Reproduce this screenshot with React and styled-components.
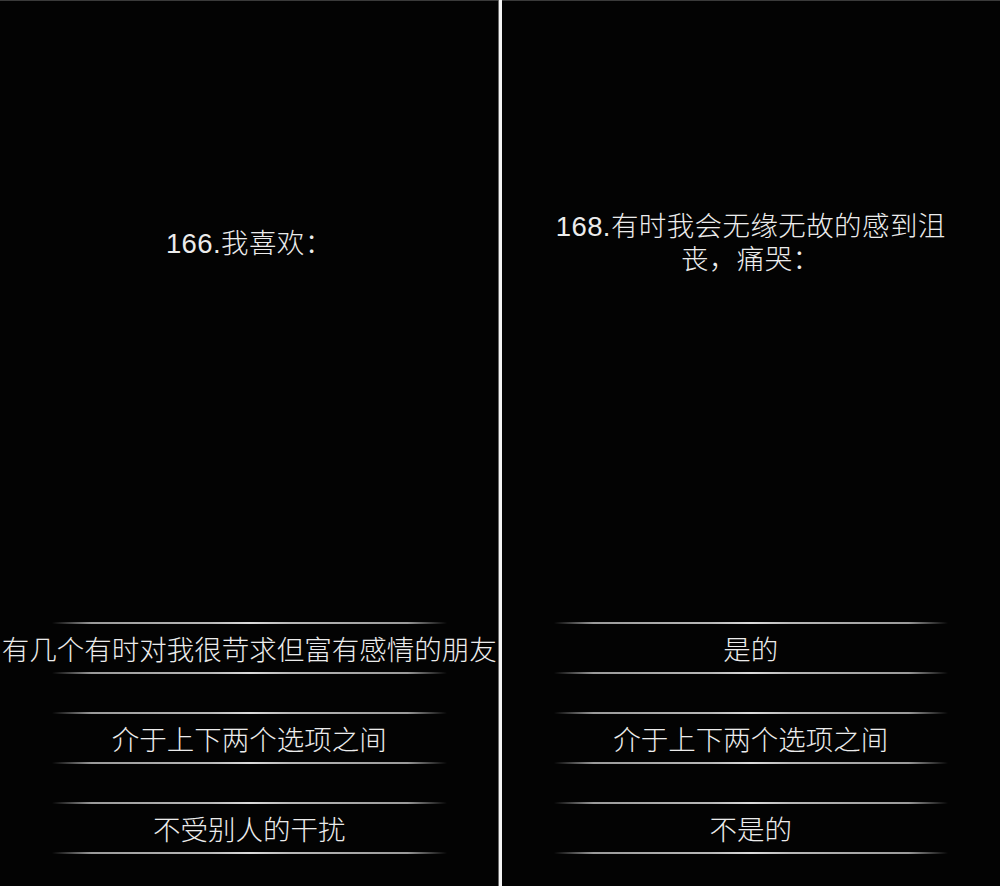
import React from 'react'
import styled, { createGlobalStyle } from 'styled-components'

const GlobalStyle = createGlobalStyle`
  html, body {
    margin: 0;
    padding: 0;
    background: #000;
  }
  body {
    font-family: "Liberation Sans", "Noto Sans CJK SC", sans-serif;
    color: #ececec;
  }
`

const screens = [
  {
    question: '166.我喜欢：',
    options: ['有几个有时对我很苛求但富有感情的朋友', '介于上下两个选项之间', '不受别人的干扰'],
  },
  {
    question: '168.有时我会无缘无故的感到沮丧，痛哭：',
    options: ['是的', '介于上下两个选项之间', '不是的'],
  },
]

const Page = () => {
  return (
    <>
      <GlobalStyle />
      <Wrap>
        {screens.map((s, i) => (
          <React.Fragment key={i}>
            {i > 0 && <Divider />}
            <Screen>
              <QuestionArea>
                <Question>{s.question}</Question>
              </QuestionArea>
              <Options>
                {s.options.map((o) => (
                  <Option key={o}>{o}</Option>
                ))}
              </Options>
            </Screen>
          </React.Fragment>
        ))}
      </Wrap>
    </>
  )
}

export default Page

const Wrap = styled.div`
  display: flex;
  width: 1000px;
  height: 886px;
  overflow: hidden;
  background: #000;
`

const Divider = styled.div`
  flex: 0 0 3px;
  background: #f4f4f4;
  box-shadow: -1px 0 0 #6a6a6a;
`

const Screen = styled.div`
  flex: 1;
  display: flex;
  flex-direction: column;
  background: #030303;
  border-top: 1px solid #3a3a3a;
  padding-bottom: 32px;
  min-width: 0;
`

const QuestionArea = styled.div`
  height: 484px;
  display: flex;
  align-items: center;
  justify-content: center;
`

const Question = styled.div`
  max-width: 402px;
  font-size: 27.5px;
  font-weight: 300;
  letter-spacing: 0.4px;
  line-height: 33px;
  text-align: center;
`

const Options = styled.div`
  margin-top: auto;
  display: flex;
  flex-direction: column;
  gap: 38px;
`

const Option = styled.div`
  position: relative;
  height: 52px;
  display: flex;
  align-items: center;
  justify-content: center;
  font-size: 27.5px;
  font-weight: 300;
  white-space: nowrap;

  &::before, &::after {
    content: '';
    position: absolute;
    left: 52px;
    right: 52px;
    height: 2px;
    background: linear-gradient(
      to right,
      rgba(160, 160, 160, 0) 0%,
      #9a9a9a 10%,
      #b8b8b8 40%,
      #dcdcdc 50%,
      #b8b8b8 60%,
      #9a9a9a 90%,
      rgba(160, 160, 160, 0) 100%
    );
  }
  &::before { top: 0; }
  &::after { bottom: 0; }
`
